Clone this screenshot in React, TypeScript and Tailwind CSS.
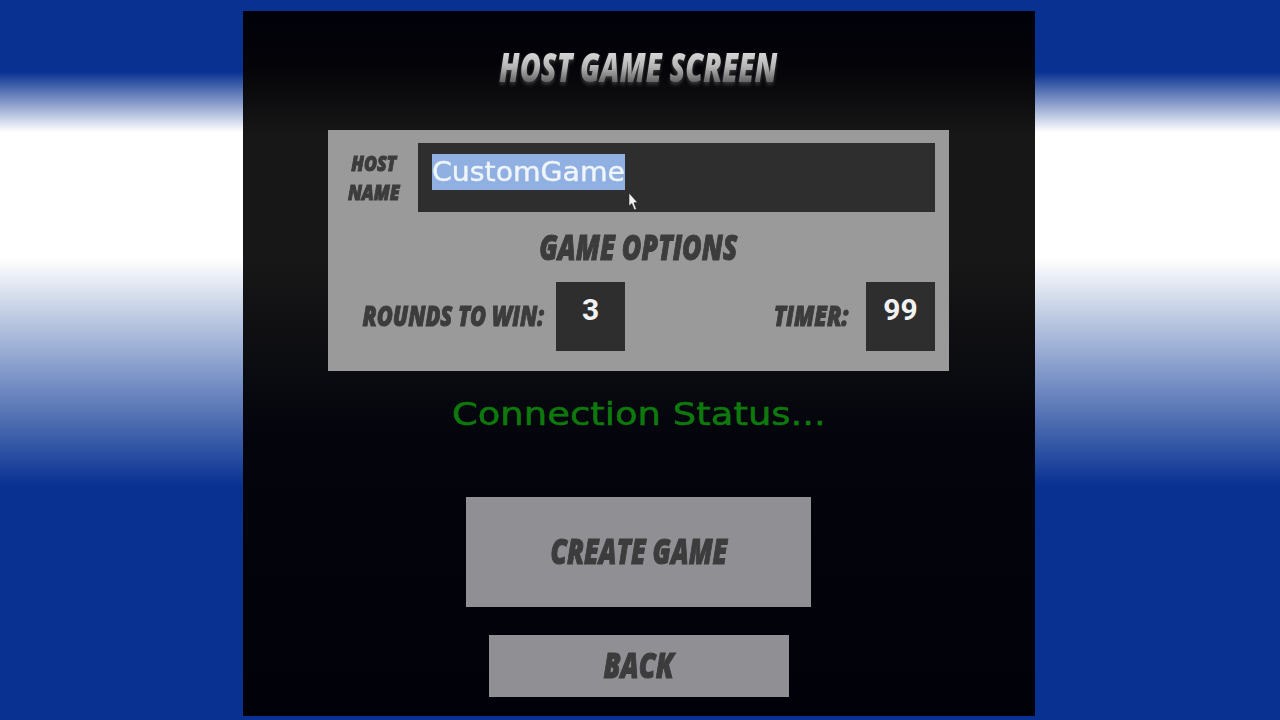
import React from 'react';

const comic = "font-['Open_Sans',sans-serif] font-extrabold italic uppercase text-[#3c3c3d] whitespace-nowrap inline-block [-webkit-text-stroke:1px_#3c3c3d]";
const tech = "font-['DejaVu_Sans',sans-serif] whitespace-nowrap";

function ValueBox({ value }: { value: string }) {
  return (
    <div className="w-[69px] h-[69px] bg-[#2e2e2e] flex justify-center pt-[12px] font-['Roboto',sans-serif] text-[30px] leading-[32px] font-bold text-[#f2f2f2]">
      {value}
    </div>
  );
}

export default function App() {
  return (
    <div className="relative w-[1280px] h-[720px] overflow-hidden pt-[11px] pl-[243px] flex bg-[linear-gradient(to_bottom,#083192_0px,#083192_72px,#ffffff_132px,#ffffff_258px,#7f97c8_375px,#083192_486px,#083192_720px)]">
      <div className="w-[792px] h-[705px] pr-[1px] flex flex-col items-center bg-[linear-gradient(to_bottom,#01010a_0px,#030308_50px,#171717_125px,#171717_250px,#03040c_430px,#01010a_705px)]">
        <div className="h-[119px] flex items-start pt-[32px]">
          <h1 className="px-2 font-['Open_Sans',sans-serif] font-extrabold italic text-[40px] leading-[48px] whitespace-nowrap scale-x-[0.72] text-transparent bg-clip-text bg-gradient-to-b from-[#f0f0f0] via-[#b5b5b5] to-[#3a3a3a] drop-shadow-[0_2px_2px_rgba(110,110,110,0.55)]">
            HOST GAME SCREEN
          </h1>
        </div>

        <div className="w-[621px] h-[241px] bg-[#9a9a9a] flex flex-col pt-[13px] px-[14px]">
          <div className="flex">
            <div className="w-[76px] h-[69px] flex flex-col items-center pt-[6px] pr-[13px]">
              <span className={`${comic} text-[21px] leading-[29px] scale-x-[0.84]`}>Host</span>
              <span className={`${comic} text-[21px] leading-[29px] scale-x-[0.84]`}>Name</span>
            </div>
            <div className="w-[517px] h-[69px] bg-[#2e2e2e] pt-[11px] pl-[14px]">
              <div className="w-[193px] h-[36px] bg-[#8fb0e0]">
                <span className={`block origin-left scale-x-[1.09] text-[#f0f4fb] text-[26px] leading-[36px] [-webkit-text-stroke:0.4px_#f0f4fb] ${tech}`}>CustomGame</span>
              </div>
            </div>
          </div>
          <div className="h-[70px] flex items-center justify-center">
            <span className={`${comic} text-[35px] leading-[44px] scale-x-[0.76]`}>Game Options</span>
          </div>
          <div className="flex items-start">
            <div className="w-[214px] h-[69px] flex items-center justify-center pl-[9px]">
              <span className={`${comic} text-[28px] leading-[36px] -mt-[4px] scale-x-[0.78]`}>Rounds to Win:</span>
            </div>
            <ValueBox value="3" />
            <div className="flex-1 h-[69px] flex items-center justify-end pr-[18px]">
              <span className={`${comic} text-[28px] leading-[36px] -mt-[4px] scale-x-[0.8] origin-right`}>Timer:</span>
            </div>
            <ValueBox value="99" />
          </div>
        </div>

        <div className={`h-[86px] flex items-center scale-x-[1.155] text-[32px] text-[#0e7a0e] [-webkit-text-stroke:0.6px_#0e7a0e] ${tech}`}>Connection Status...</div>

        <button className="w-[345px] h-[110px] mt-[40px] bg-[#909094] flex items-center justify-center">
          <span className={`${comic} text-[35px] leading-[44px] -mt-[2px] scale-x-[0.75]`}>Create Game</span>
        </button>
        <button className="w-[300px] h-[62px] mt-[28px] bg-[#909094] flex items-center justify-center">
          <span className={`${comic} text-[35px] leading-[44px] -mt-[2px] scale-x-[0.77]`}>Back</span>
        </button>
      </div>

      <svg className="absolute left-[628px] top-[192px]" width="11" height="20" viewBox="0 0 11 20">
        <path d="M1 1 L1 14 L3.8 11.6 L6.4 18 L8.4 17 L5.9 10.8 L9.5 10.4 Z" fill="#f4f4f4" stroke="#222222" strokeWidth="0.6" />
      </svg>
    </div>
  );
}
